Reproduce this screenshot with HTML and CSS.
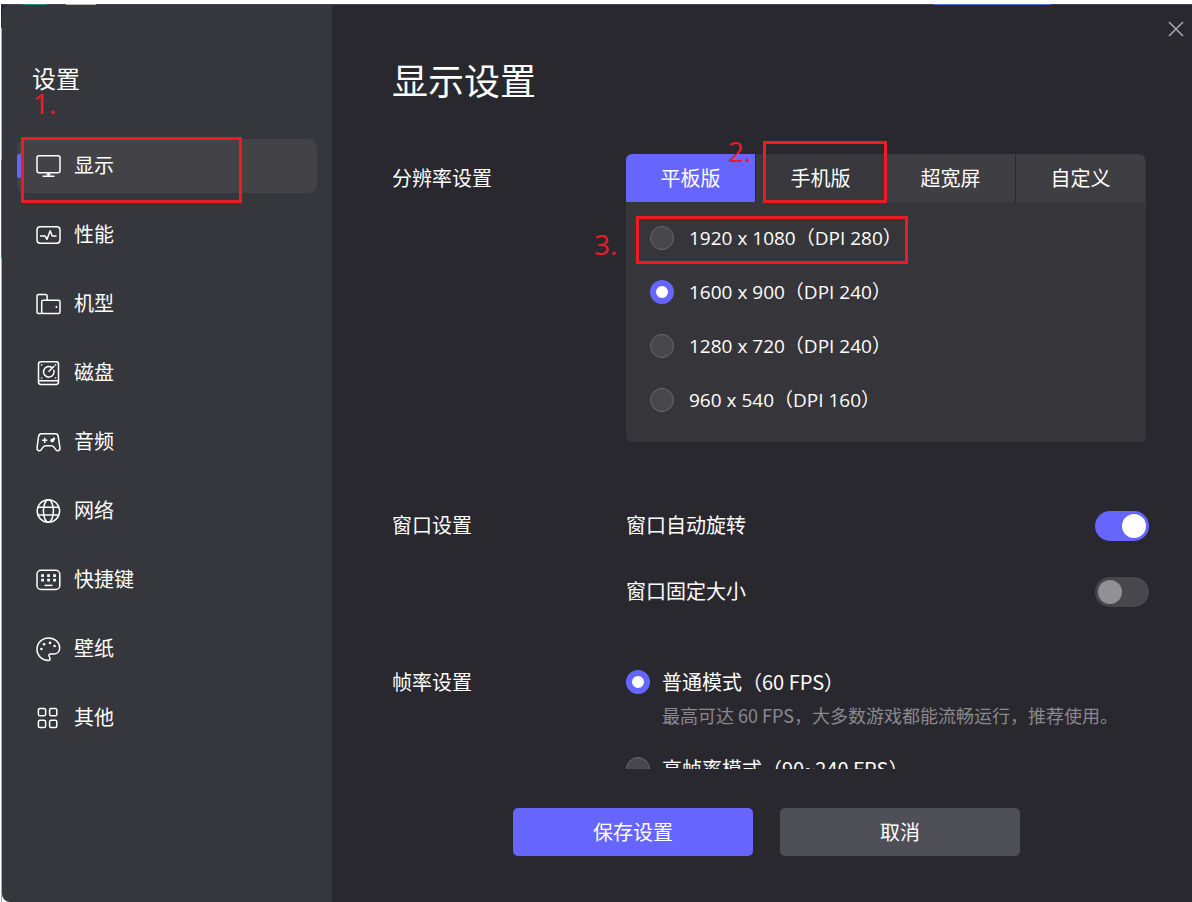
FILE: index.html
```html
<!DOCTYPE html>
<html lang="zh-CN">
<head>
<meta charset="utf-8">
<meta name="viewport" content="width=device-width, initial-scale=1">
<title>设置</title>
<link rel="stylesheet" href="styles.css">
</head>
<body>
<div class="window">
  <aside class="sidebar">
    <h2 class="sidebar-title">设置<span class="step step-one">1.</span></h2>
    <nav class="nav">
      <a class="nav-item active" href="#display">
        <svg class="icon" viewBox="0 0 24 24"><rect x="1" y="1.7" width="23" height="17" rx="2"/><path d="M12.5 19v3M6.500 22.200h12"/><path d="M10.500 20.500h4"/></svg>
        <span>显示</span>
        <i class="mark mark-nav"></i>
      </a>
      <a class="nav-item" href="#performance">
        <svg class="icon" viewBox="0 0 24 24"><rect x="1" y="3.7" width="23" height="16.6" rx="3.2"/><path d="M4 13h5l2 3.300 3.200-8.600 2 5.300h4.400"/></svg>
        <span>性能</span>
      </a>
      <a class="nav-item" href="#model">
        <svg class="icon" viewBox="0 0 24 24"><path d="M5.700 21.600H2.400A1.400 1.400 0 0 1 1 20.200V4a1.400 1.400 0 0 1 1.400-1.400h7.300A1.400 1.400 0 0 1 11.100 4v4.300"/><rect x="5.700" y="8.300" width="18.300" height="13.300" rx="1.500"/><path d="M20.400 14v2"/></svg>
        <span>机型</span>
      </a>
      <a class="nav-item" href="#disk">
        <svg class="icon" viewBox="0 0 24 24"><rect x="2.500" y="0.800" width="20" height="22.700" rx="2.400"/><path d="M2.500 19.800h20M12.500 10.800l5.800-5.800M16 6.600a5.300 5.300 0 1 0 1.700 2.200"/><g class="solid"><circle cx="5.600" cy="3.900" r=".8"/><circle cx="19.500" cy="3.900" r=".8"/><circle cx="5.600" cy="17" r=".8"/><circle cx="19.500" cy="17" r=".8"/></g></svg>
        <span>磁盘</span>
      </a>
      <a class="nav-item" href="#audio">
        <svg class="icon" viewBox="0 0 24 24"><path d="M5.600 3.700h13.600c1.700 0 2.700.9 3 2.600L24 18c.3 2.600-2.500 3.600-4 1.900l-2.300-3a3 3 0 0 0-2.300-1.200H9.600a3 3 0 0 0-2.300 1.200l-2.300 3C3.500 21.600.7 20.600 1 18L2.600 6.300c.3-1.700 1.300-2.600 3-2.600zM8.700 7.700v5.200M6.100 10.300h5.200"/><g class="solid"><circle cx="16.300" cy="10.400" r="1.900"/><circle cx="18" cy="8.700" r="1.200"/></g></svg>
        <span>音频</span>
      </a>
      <a class="nav-item" href="#network">
        <svg class="icon" viewBox="0 0 24 24"><circle cx="12.400" cy="12" r="11.200"/><ellipse cx="12.400" cy="12" rx="5" ry="11.200"/><path d="M1.800 8.300h21.200M1.800 15.900h21.200"/></svg>
        <span>网络</span>
      </a>
      <a class="nav-item" href="#shortcuts">
        <svg class="icon" viewBox="0 0 24 24"><rect x="1" y="2.300" width="22.800" height="19.200" rx="4"/><path d="M8.500 17.400h8"/><g class="solid"><path d="M5.200 6.200h2.700v2.700H5.200zM11.200 6.200h2.700v2.700h-2.700zM17.200 6.200h2.700v2.700h-2.700zM5.200 10.800h2.700v2.700H5.200zM11.200 10.800h2.700v2.700h-2.700zM17.200 10.800h2.700v2.700h-2.700z"/></g></svg>
        <span>快捷键</span>
      </a>
      <a class="nav-item" href="#wallpaper">
        <svg class="icon" viewBox="0 0 24 24"><path d="M12.800 23.400C6 23.600 1 18.400 1 12.200 1 5.900 6.100.9 12.500.9c6.200 0 11.200 4.300 11.200 9.800 0 3.900-2.600 6.300-6 6.300h-3.200c-1.500 0-2 1.400-1.200 2.600.8 1.300 1.500 3.600-.5 3.800z"/><g class="solid"><circle cx="8.100" cy="7.300" r="1.300"/><circle cx="14" cy="5.900" r="1.300"/><circle cx="18.600" cy="9" r="1.300"/><circle cx="5.400" cy="12" r="1.300"/></g></svg>
        <span>壁纸</span>
      </a>
      <a class="nav-item" href="#other">
        <svg class="icon" viewBox="0 0 24 24"><rect x="2.400" y="2.400" width="7.200" height="7.400" rx="1.600"/><rect x="13.600" y="2.400" width="7.200" height="7.400" rx="1.600"/><rect x="2.400" y="14.200" width="7.200" height="7.400" rx="1.600"/><rect x="13.600" y="14.200" width="7.200" height="7.400" rx="1.600"/></svg>
        <span>其他</span>
      </a>
    </nav>
  </aside>

  <main class="main">
    <button class="close" type="button" aria-label="关闭">
      <svg viewBox="0 0 16 16"><path d="M1 1l14 14M15 1L1 15"/></svg>
    </button>
    <div class="content">
      <h1 class="title">显示设置</h1>

      <section class="row">
        <h3 class="row-label tall">分辨率设置</h3>
        <div class="card">
          <div class="tabs">
            <button class="tab selected" type="button">平板版</button>
            <button class="tab hover" type="button">手机版<span class="step step-two">2.</span><i class="mark mark-tab"></i></button>
            <button class="tab" type="button">超宽屏</button>
            <button class="tab" type="button">自定义</button>
          </div>
          <div class="options">
            <label class="option"><input class="radio" type="radio" name="resolution"><span>1920 x 1080（DPI 280）</span><span class="step step-three">3.</span><i class="mark mark-option"></i></label>
            <label class="option"><input class="radio" type="radio" name="resolution" checked><span>1600 x 900（DPI 240）</span></label>
            <label class="option"><input class="radio" type="radio" name="resolution"><span>1280 x 720（DPI 240）</span></label>
            <label class="option"><input class="radio" type="radio" name="resolution"><span>960 x 540（DPI 160）</span></label>
          </div>
        </div>
      </section>

      <section class="row">
        <h3 class="row-label">窗口设置</h3>
        <div class="switches">
          <label class="switch-row"><span>窗口自动旋转</span><input class="switch" type="checkbox" checked></label>
          <label class="switch-row"><span>窗口固定大小</span><input class="switch" type="checkbox"></label>
        </div>
      </section>

      <section class="row">
        <h3 class="row-label">帧率设置</h3>
        <div class="modes">
          <div class="mode">
            <input class="radio" type="radio" name="fps" id="fps-normal" checked>
            <label for="fps-normal">普通模式（60 FPS）</label>
            <p class="hint">最高可达 60 FPS，大多数游戏都能流畅运行，推荐使用。</p>
          </div>
          <div class="mode">
            <input class="radio" type="radio" name="fps" id="fps-high">
            <label for="fps-high">高帧率模式（90~240 FPS）</label>
          </div>
        </div>
      </section>
    </div>
    <footer class="footer">
      <button class="action primary" type="button">保存设置</button>
      <button class="action" type="button">取消</button>
    </footer>
  </main>
</div>
</body>
</html>
```

FILE: styles.css
```css
:root {
  --accent: #6666ff;
  --mark: #ed1c24;
}

* {
  box-sizing: border-box;
}

body {
  margin: 0;
  background: #fff;
  color: #fff;
  font: 20px/28px "Noto Sans CJK SC", sans-serif;
}

h1, h2, h3, p {
  margin: 0;
  font-weight: inherit;
}

button {
  border: 0;
  padding: 0;
  color: inherit;
  font: inherit;
}

/* A sliver of the app behind the dialog shows along its top and left edges */
.window {
  display: flex;
  height: 100vh;
  padding: 5px 0 0 2px;
  background:
    linear-gradient(90deg, #fff 1px, #44434a 1px, #44434a 23px, #2c8a7c 23px, #2c8a7c 47px, #44434a 47px, #44434a 66px, #b9b7b4 66px, #b9b7b4 96px, #44434a 96px, #44434a 934px, #5570d8 934px, #5570d8 1051px, #44434a 1051px) 0 4px / 100% 1px no-repeat,
    linear-gradient(#242a36, #242a36) 1px 4px / 10px 24px no-repeat,
    linear-gradient(#2c7a70, #2c7a70) 1px 160px / 1px 98px no-repeat,
    linear-gradient(90deg, #fff 1px, #a9acb0 1px, #a9acb0 2px, #fff 2px) 0 5px no-repeat;
}

.sidebar {
  flex: 0 0 330px;
  padding: 55px 15px 0;
  border-radius: 8px 0 0 8px;
  background: #36373c;
}

.sidebar-title {
  position: relative;
  margin-bottom: 43px;
  padding-left: 15px;
  font-size: 24px;
  line-height: 36px;
}

.nav {
  display: flex;
  flex-direction: column;
  gap: 15px;
}

.nav-item {
  position: relative;
  display: flex;
  align-items: center;
  gap: 14px;
  height: 54px;
  padding-left: 19px;
  border-radius: 9px;
  color: inherit;
  text-decoration: none;
}

.nav-item span {
  padding-bottom: 2px;
}

.nav-item.active {
  background: #434247;
}

.nav-item.active::before {
  content: "";
  position: absolute;
  left: 0;
  width: 5px;
  height: 24px;
  border-radius: 2px;
  background: var(--accent);
}

.icon {
  width: 24px;
  height: 24px;
  overflow: visible;
  fill: none;
  stroke: #fff;
  stroke-width: 1.5;
  stroke-linejoin: round;
}

.icon .solid {
  fill: #fff;
  stroke: none;
}

.main {
  position: relative;
  flex: 1;
  min-width: 0;
  display: flex;
  flex-direction: column;
  background: #29282e;
}

.close {
  position: absolute;
  top: 16px;
  right: 8px;
  width: 16px;
  height: 16px;
  background: none;
}

.close svg {
  display: block;
  fill: none;
  stroke: #aaa9bd;
  stroke-width: 1.5;
}

.content {
  flex: 1;
  min-height: 0;
  padding: 50px 43px 0 60px;
  overflow-y: auto;
  scrollbar-width: none;
}

.title {
  margin-bottom: 51px;
  font-size: 36px;
  line-height: 48px;
}

.row {
  display: grid;
  grid-template-columns: 234px 1fr;
  margin-bottom: 61px;
}

.row-label {
  font-size: 20px;
}

.row-label.tall {
  line-height: 48px;
}

.card {
  margin: 0 3px 8px 0;
  border-radius: 6px;
  background: #36353a;
}

.tabs {
  display: grid;
  grid-template-columns: repeat(4, 1fr);
  gap: 1px;
  margin-right: 1px;
  border-radius: 6px 6px 0 0;
  background: #29282e;
}

.tab {
  position: relative;
  height: 48px;
  background: #3f3e43;
}

.tab.selected {
  border-top-left-radius: 6px;
  background: var(--accent);
}

.tab.hover {
  background: #38373b;
}

.tab:last-child {
  border-top-right-radius: 6px;
}

.options {
  display: flex;
  flex-direction: column;
  align-items: flex-start;
  padding: 9px 24px 15px;
}

.option {
  position: relative;
  display: flex;
  align-items: center;
  gap: 15px;
  height: 54px;
  font-family: "Open Sans", "Noto Sans CJK SC", sans-serif;
  font-size: 19px;
}

.radio {
  appearance: none;
  flex: none;
  width: 24px;
  height: 24px;
  margin: 0;
  border: 1px solid #68676c;
  border-radius: 50%;
  background: #48474c;
}

.radio:checked {
  border: 6px solid var(--accent);
  background: #fff;
}

.switches {
  display: grid;
  gap: 36px;
}

.switch-row {
  display: flex;
  justify-content: space-between;
}

.switch {
  appearance: none;
  display: flex;
  width: 54px;
  height: 30px;
  margin: 0;
  padding: 3px;
  border-radius: 15px;
  background: #48474c;
}

.switch::before {
  content: "";
  width: 24px;
  height: 24px;
  border-radius: 50%;
  background: #919095;
}

.switch:checked {
  justify-content: flex-end;
  background: var(--accent);
}

.switch:checked::before {
  background: #fff;
}

.modes {
  display: grid;
  gap: 26px;
}

.mode {
  display: grid;
  grid-template-columns: 24px 1fr;
  column-gap: 12px;
  align-items: center;
}

.hint {
  grid-column: 2;
  margin-top: 5px;
  color: #8a898e;
  font-size: 18px;
}

.footer {
  display: flex;
  justify-content: center;
  gap: 27px;
  padding: 39px 0 46px 9px;
}

.action {
  width: 240px;
  height: 48px;
  border-radius: 5px;
  background: #4f4f57;
}

.action.primary {
  background: var(--accent);
}

/* Numbered tutorial marks drawn over the controls */
.mark {
  position: absolute;
  z-index: 1;
  border: 3px solid var(--mark);
  pointer-events: none;
}

.mark-nav {
  inset: -2px 75px -10px 4px;
}

.mark-tab {
  inset: -13px -2px -1px 7px;
}

.mark-option {
  inset: 5px -6px 1px -14px;
}

.step {
  position: absolute;
  z-index: 1;
  color: var(--mark);
  font: 28px/28px "Open Sans", sans-serif;
}

.step-one {
  top: 29px;
  left: 16px;
}

.step-two {
  top: -17px;
  left: -28px;
}

.step-three {
  top: 19px;
  left: -56px;
}
```
